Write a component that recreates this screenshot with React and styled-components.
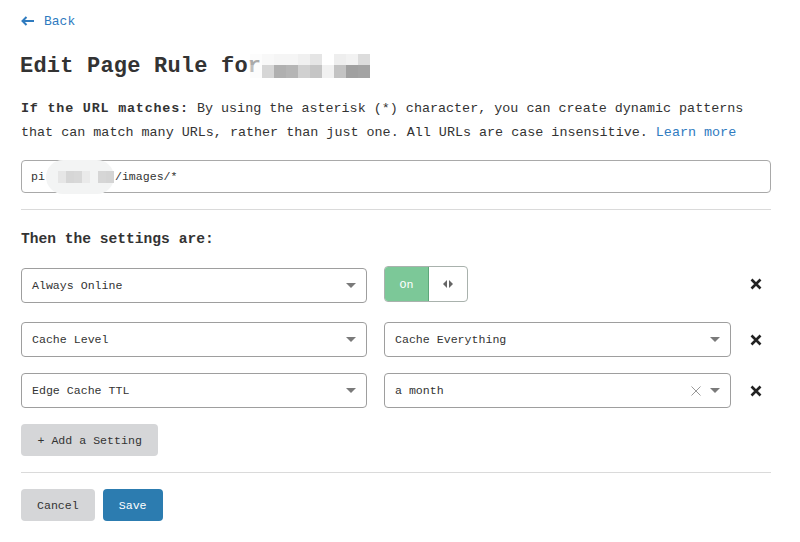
import React from 'react';
import styled, { createGlobalStyle } from 'styled-components';

const GlobalStyle = createGlobalStyle`
    html, body {
        margin: 0;
        padding: 0;
        background: #fff;
    }
    body {
        font-family: "Liberation Mono", "DejaVu Sans Mono", monospace;
        color: #333;
    }
`

const Page = styled.div`
    width: 750px;
    padding: 11px 0 0 21px;
`

const BackLink = styled.a`
    display: flex;
    align-items: center;
    gap: 9px;
    height: 20px;
    color: #2f7bbf;
    font-size: 13px;
    text-decoration: none;
`

const Title = styled.h1`
    display: flex;
    align-items: center;
    margin: 21px 0 0 -1px;
    height: 28px;
    font-size: 22px;
    letter-spacing: 0.2px;
    font-weight: bold;
    color: #333;
`

const Blur = styled.span`
    display: inline-grid;
    grid-template-columns: repeat(${p => p.$cols}, ${p => p.$cell}px);
    grid-template-rows: ${p => p.$rows};
    margin-left: ${p => p.$offset}px;
`

const Pixel = styled.span`
    background: ${p => p.$shade};
`

const Intro = styled.p`
    margin: 17px 0 0;
    font-size: 13.4px;
    line-height: 24px;
    color: #333;
    b { font-weight: bold; letter-spacing: 0.8px; }
    a { color: #2f7bbf; text-decoration: none; }
`

const UrlInput = styled.div`
    display: flex;
    align-items: center;
    margin-top: 15px;
    height: 31px;
    padding: 0 8px 0 9px;
    border: 1px solid #a9a9a9;
    border-radius: 4px;
    font-size: 11.6px;
    color: #333;
`

const Smudge = styled.span`
    display: inline-flex;
    align-items: center;
    height: 34px;
    margin: 0 1px 0 1px;
    padding: 0 0 0 4px;
    background: #f3f4f4;
    border-radius: 17px;
`

const Rule = styled.hr`
    margin: ${p => p.$top}px 0 0;
    border: 0;
    border-top: 1px solid #dadada;
`

const SubHead = styled.h2`
    margin: 19px 0 0;
    height: 20px;
    line-height: 20px;
    font-size: 14.6px;
    font-weight: bold;
    color: #333;
`

const Settings = styled.div`
    display: flex;
    flex-direction: column;
    margin-top: 17px;
`

const SettingRow = styled.div`
    display: grid;
    grid-template-columns: 346px 347px 1fr;
    column-gap: 17px;
    align-items: end;
    margin-top: ${p => p.$mt}px;
`

const Select = styled.div`
    display: flex;
    align-items: center;
    height: 33px;
    padding: 0 9px 0 10px;
    border: 1px solid #9e9e9e;
    border-radius: 4px;
    font-size: 11.6px;
    color: #333;
`

const SelectText = styled.span`
    flex: 1;
`

const Caret = styled.span`
    width: 0;
    height: 0;
    margin-right: 1px;
    border-left: 5px solid transparent;
    border-right: 5px solid transparent;
    border-top: 5px solid #7a7a7a;
`

const ClearIcon = styled.svg`
    margin-right: 9px;
`

const Toggle = styled.div`
    align-self: start;
    display: flex;
    width: 84px;
    height: 36px;
    margin-bottom: 1px;
    box-sizing: border-box;
    border: 1px solid #a9b2ad;
    border-radius: 4px;
    overflow: hidden;
`

const ToggleOn = styled.span`
    display: flex;
    align-items: center;
    justify-content: center;
    width: 43px;
    background: #7cc898;
    border-right: 1px solid #5da77a;
    color: #fff;
    font-size: 11.6px;
`

const ToggleKnob = styled.span`
    display: flex;
    align-items: center;
    justify-content: center;
    flex: 1;
    gap: 2px;
`

const Arrow = styled.span`
    width: 0;
    height: 0;
    border-top: 4px solid transparent;
    border-bottom: 4px solid transparent;
    ${p => p.$dir === 'left'
        ? 'border-right: 4px solid #666;'
        : 'border-left: 4px solid #666;'}
`

const RemoveButton = styled.button`
    justify-self: start;
    align-self: ${p => p.$top ? 'start' : 'center'};
    display: flex;
    align-items: center;
    justify-content: center;
    width: 16px;
    height: ${p => p.$top ? 36 : 16}px;
    padding: 0;
    border: 0;
    background: none;
`

const Button = styled.button`
    height: 32px;
    padding: 0 ${p => p.$pad}px;
    border: 0;
    border-radius: 4px;
    background: ${p => p.$primary ? '#2c7cb0' : '#d5d6d8'};
    color: ${p => p.$primary ? '#fff' : '#333'};
    font-family: "Liberation Mono", "DejaVu Sans Mono", monospace;
    font-size: 11.6px;
`

const AddButton = styled(Button)`
    display: block;
    margin-top: 16px;
`

const Footer = styled.div`
    display: flex;
    gap: 8px;
    margin-top: 16px;
`

const titleBlur = [
    'rgba(250,250,250,0.6)', '#f8f8f8', '#f5f5f5', '#f5f5f5', '#f0f0f0', '#e5e5e5', '#ffffff', '#eeeeee', '#f2f2f2', '#dcdcdc',
    'rgba(251,251,251,0.7)', '#d6d6d6', '#b0b0b0', '#b5b5b5', '#d0d0d0', '#c5c5c5', '#f1f1f1', '#c3c3c3', '#a0a0a0', '#a3a3a3'
]

const urlBlur = ['#f3f4f4', '#e6e6e6', '#d6d6d6', '#d8d8d8', '#eaeaea', '#f3f4f4', '#d6d6d6', '#d4d4d4']

const BackArrow = () => (
    <svg width="14" height="10" viewBox="0 0 14 10">
        <path d="M13 5H2M5.5 1L1.5 5l4 4" fill="none" stroke="#2f7bbf" strokeWidth="2" />
    </svg>
)

const CloseIcon = () => (
    <svg width="12" height="12" viewBox="0 0 12 12">
        <path d="M1.5 1.5l9 9M10.5 1.5l-9 9" stroke="#222" strokeWidth="2.6" />
    </svg>
)

function App() {
    return (
        <Page>
            <GlobalStyle />
            <BackLink href="#"><BackArrow />Back</BackLink>

            <Title>
                Edit Page Rule for
                <Blur $cols={10} $cell={12} $rows="11px 13px" $offset={-11}>
                    {titleBlur.map((c, i) => <Pixel key={i} $shade={c} />)}
                </Blur>
            </Title>

            <Intro>
                <b>If the URL matches:</b> By using the asterisk (*) character, you can create dynamic patterns
                that can match many URLs, rather than just one. All URLs are case insensitive. <a href="#">Learn more</a>
            </Intro>

            <UrlInput>
                pi
                <Smudge>
                    <Blur $cols={8} $cell={8} $rows="12px" $offset={0}>
                        {urlBlur.map((c, i) => <Pixel key={i} $shade={c} />)}
                    </Blur>
                </Smudge>
                /images/*
            </UrlInput>

            <Rule $top={16} />

            <SubHead>Then the settings are:</SubHead>

            <Settings>
                <SettingRow $mt={0}>
                    <Select>
                        <SelectText>Always Online</SelectText><Caret />
                    </Select>
                    <Toggle>
                        <ToggleOn>On</ToggleOn>
                        <ToggleKnob><Arrow $dir="left" /><Arrow $dir="right" /></ToggleKnob>
                    </Toggle>
                    <RemoveButton $top><CloseIcon /></RemoveButton>
                </SettingRow>
                <SettingRow $mt={19}>
                    <Select>
                        <SelectText>Cache Level</SelectText><Caret />
                    </Select>
                    <Select>
                        <SelectText>Cache Everything</SelectText><Caret />
                    </Select>
                    <RemoveButton><CloseIcon /></RemoveButton>
                </SettingRow>
                <SettingRow $mt={16}>
                    <Select>
                        <SelectText>Edge Cache TTL</SelectText><Caret />
                    </Select>
                    <Select>
                        <SelectText>a month</SelectText>
                        <ClearIcon width="10" height="10" viewBox="0 0 10 10">
                            <path d="M0.5 0.5l9 9M9.5 0.5l-9 9" stroke="#999" strokeWidth="1" />
                        </ClearIcon>
                        <Caret />
                    </Select>
                    <RemoveButton><CloseIcon /></RemoveButton>
                </SettingRow>
            </Settings>

            <AddButton $pad={16.5}>+ Add a Setting</AddButton>

            <Rule $top={16} />

            <Footer>
                <Button $pad={16}>Cancel</Button>
                <Button $pad={16} $primary>Save</Button>
            </Footer>
        </Page>
    );
}

export default App;
